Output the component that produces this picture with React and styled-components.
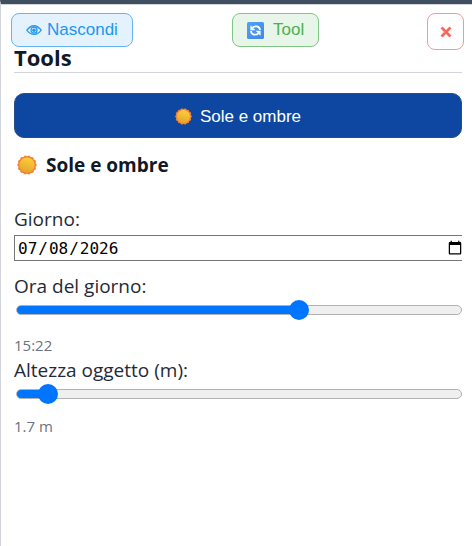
import React, { useState } from 'react';
import styled, { createGlobalStyle } from 'styled-components';

const GlobalStyle = createGlobalStyle`
  * {
    box-sizing: border-box;
  }
  body {
    margin: 0;
    background: #fff;
    color: #1f2937;
    font-family: 'Open Sans', 'Noto Sans', sans-serif;
  }
`;

const Panel = styled.main`
  position: relative;
  min-height: 100vh;
  padding: 40px 10px 20px 13px;
  border-top: 4px solid #3f4f5f;
  border-left: 1px solid #d1d5db;
  box-shadow: inset 0 1px 0 #d1d5db;
`;

const Toolbar = styled.div`
  position: absolute;
  top: 9px;
  left: 10px;
  right: 8px;
  display: grid;
  grid-template-columns: 20fr 21fr;
  align-items: start;
`;

const ToolbarEnd = styled.div`
  display: flex;
  justify-content: space-between;
  align-items: flex-start;
`;

const tones = {
  blue: { text: '#2196f3', back: '#e3f2fd', line: '#64b5f6' },
  green: { text: '#4caf50', back: '#e8f5e9', line: '#81c784' },
  red: { text: '#f6695f', back: '#fff', line: '#f49a95' },
};

const BarButton = styled.button`
  display: inline-flex;
  align-items: center;
  justify-content: center;
  justify-self: start;
  gap: ${(p) => (p.$wide ? '9px' : '5px')};
  width: ${(p) => (p.$square ? '37px' : 'auto')};
  height: ${(p) => (p.$square ? '37px' : '34px')};
  padding: ${(p) => (p.$square ? '0' : '0 14px')};
  border: 1px solid ${(p) => tones[p.$tone].line};
  border-radius: 8px;
  background: ${(p) => tones[p.$tone].back};
  color: ${(p) => tones[p.$tone].text};
  font: 17px 'Liberation Sans', Arial, sans-serif;
  cursor: pointer;
`;

const Title = styled.h1`
  margin: 0 0 20px;
  padding-bottom: 1px;
  border-bottom: 1px solid #d1d5db;
  color: #111827;
  font-size: 22px;
  line-height: 27px;
`;

const ModeButton = styled.button`
  display: flex;
  align-items: center;
  justify-content: center;
  gap: 8px;
  width: 100%;
  height: 45px;
  padding: 2px 0 0;
  border: 1px solid #2a4d86;
  border-radius: 10px;
  background: #0d47a1;
  color: #fff;
  font: 17px 'Liberation Sans', Arial, sans-serif;
  cursor: pointer;
`;

const SectionTitle = styled.h2`
  display: flex;
  align-items: center;
  gap: 9px;
  margin: 12px 0 26px;
  padding-left: 3px;
  color: #111827;
  font-size: 19px;
  line-height: 30px;
`;

const Label = styled.label`
  display: block;
  font-size: 19px;
  line-height: 26px;
`;

const Clip = styled.div`
  overflow: hidden;
`;

const DateInput = styled.input`
  display: block;
  width: calc(100% + 4px);
  height: 26px;
  margin: 3px 0 12px;
  padding: 0 2px;
  border: 1px solid #767676;
  background: #fff;
  color: #000;
  font: 16px 'DejaVu Sans Mono', monospace;

  &::-webkit-calendar-picker-indicator {
    width: 16px;
    height: 16px;
    padding: 0;
  }
`;

const Slider = styled.input`
  appearance: none;
  display: block;
  width: calc(100% - 2px);
  height: 20px;
  margin: 1px 0 0 2px;
  background: transparent;

  &::-webkit-slider-runnable-track {
    height: 10px;
    border: 1px solid #b2b2b2;
    border-radius: 5px;
    background: linear-gradient(#0075ff, #0075ff) border-box no-repeat #efefef;
    background-size: var(--fill) 100%;
  }

  &::-webkit-slider-thumb {
    appearance: none;
    width: 20px;
    height: 20px;
    margin-top: -6px;
    border-radius: 50%;
    background: #0075ff;
  }
`;

const Value = styled.output`
  display: block;
  padding-top: ${(p) => (p.$near ? '10px' : '13px')};
  color: #6b7280;
  font-size: 15px;
  line-height: 24px;
`;

const EyeIcon = () => (
  <svg width="16" height="12" viewBox="0 0 16 12" fill="none" stroke="currentColor" aria-hidden="true">
    <path d="M.8 6.2C3 3 5.3 1.6 8 1.6s5 1.4 7.2 4.6C13 9.2 10.7 10.4 8 10.4S3 9.2.8 6.2Z" strokeWidth="1.2" />
    <path d="M2.5 5C4.2 3.4 6 2.8 8 2.8s3.8.6 5.5 2.2" strokeWidth=".8" />
    <circle cx="8" cy="6.2" r="3" strokeWidth="1.2" />
    <circle cx="8" cy="6.3" r="1.8" fill="currentColor" stroke="none" />
  </svg>
);

const RefreshIcon = () => (
  <svg width="17" height="17" viewBox="0 0 17 17" aria-hidden="true">
    <defs>
      <linearGradient id="tile" x1="0" y1="0" x2="1" y2="1">
        <stop offset="0" stopColor="#4fa3f7" />
        <stop offset="1" stopColor="#4285ea" />
      </linearGradient>
    </defs>
    <rect width="17" height="17" rx="1.5" fill="url(#tile)" />
    <g fill="none" stroke="#fff" strokeWidth="1.8">
      <path d="M5.5 5.6C7.6 3.6 12.6 3.6 13 8" />
      <path d="M11.5 11.4C9.4 13.4 4.400 13.4 4 9" />
    </g>
    <path d="M3.4 3.2v5h5ZM13.6 13.800v-5h-5Z" fill="#fff" />
  </svg>
);

const CloseIcon = () => (
  <svg width="12" height="12" viewBox="0 0 12 12" stroke="currentColor" strokeWidth="2.8" aria-hidden="true">
    <path d="M1.5 1.5l9 9M10.5 1.5l-9 9" />
  </svg>
);

// scalloped rim: small bumps round the disc
const bumps = Array.from({ length: 14 }, (_, i) => {
  const a = (i * Math.PI) / 7;
  return { cx: 10 + 8 * Math.cos(a), cy: 10 + 8 * Math.sin(a) };
});

const SunIcon = ({ size, id }) => (
  <svg width={size} height={size} viewBox="0 0 20 20" aria-hidden="true">
    <defs>
      <linearGradient id={id} x1=".7" y1="0" x2=".4" y2="1">
        <stop offset="0" stopColor="#fdcf3b" />
        <stop offset="1" stopColor="#e5a52c" />
      </linearGradient>
    </defs>
    {bumps.map((b) => (
      <circle key={`${b.cx}-${b.cy}`} cx={b.cx} cy={b.cy} r="1.7" fill="#f58235" />
    ))}
    <circle cx="10" cy="10" r="8.8" fill="#f58235" />
    <circle cx="10" cy="10" r="7.6" fill={`url(#${id})`} />
  </svg>
);

const fill = (value, min, max) => {
  const part = (value - min) / (max - min);
  return { '--fill': `calc(10px + (100% - 20px) * ${part})` };
};

const formatTime = (minutes) => {
  const h = String(Math.floor(minutes / 60)).padStart(2, '0');
  const m = String(minutes % 60).padStart(2, '0');
  return `${h}:${m}`;
};

const App = () => {
  const [day, setDay] = useState('2026-07-08');
  const [minutes, setMinutes] = useState(922);
  const [height, setHeight] = useState(1.7);

  return (
    <>
      <GlobalStyle />
      <Panel>
        <Title>Tools</Title>
        <Toolbar>
          <BarButton type="button" $tone="blue">
            <EyeIcon />
            Nascondi
          </BarButton>
          <ToolbarEnd>
            <BarButton type="button" $tone="green" $wide>
              <RefreshIcon />
              Tool
            </BarButton>
            <BarButton type="button" $tone="red" $square aria-label="Chiudi">
              <CloseIcon />
            </BarButton>
          </ToolbarEnd>
        </Toolbar>

        <ModeButton type="button">
          <SunIcon size={17} id="sun-button" />
          Sole e ombre
        </ModeButton>

        <SectionTitle>
          <SunIcon size={20} id="sun-title" />
          Sole e ombre
        </SectionTitle>

        <Label htmlFor="day">Giorno:</Label>
        <Clip>
          <DateInput id="day" type="date" value={day} onChange={(e) => setDay(e.target.value)} />
        </Clip>

        <Label htmlFor="time">Ora del giorno:</Label>
        <Slider
          id="time"
          type="range"
          min="0"
          max="1435"
          value={minutes}
          style={fill(minutes, 0, 1435)}
          onChange={(e) => setMinutes(Number(e.target.value))}
        />
        <Value htmlFor="time">{formatTime(minutes)}</Value>

        <Label htmlFor="height">Altezza oggetto (m):</Label>
        <Slider
          id="height"
          type="range"
          min="0.5"
          max="25"
          step="0.1"
          value={height}
          style={fill(height, 0.5, 25)}
          onChange={(e) => setHeight(Number(e.target.value))}
        />
        <Value htmlFor="height" $near>{height} m</Value>
      </Panel>
    </>
  );
};

export default App;
